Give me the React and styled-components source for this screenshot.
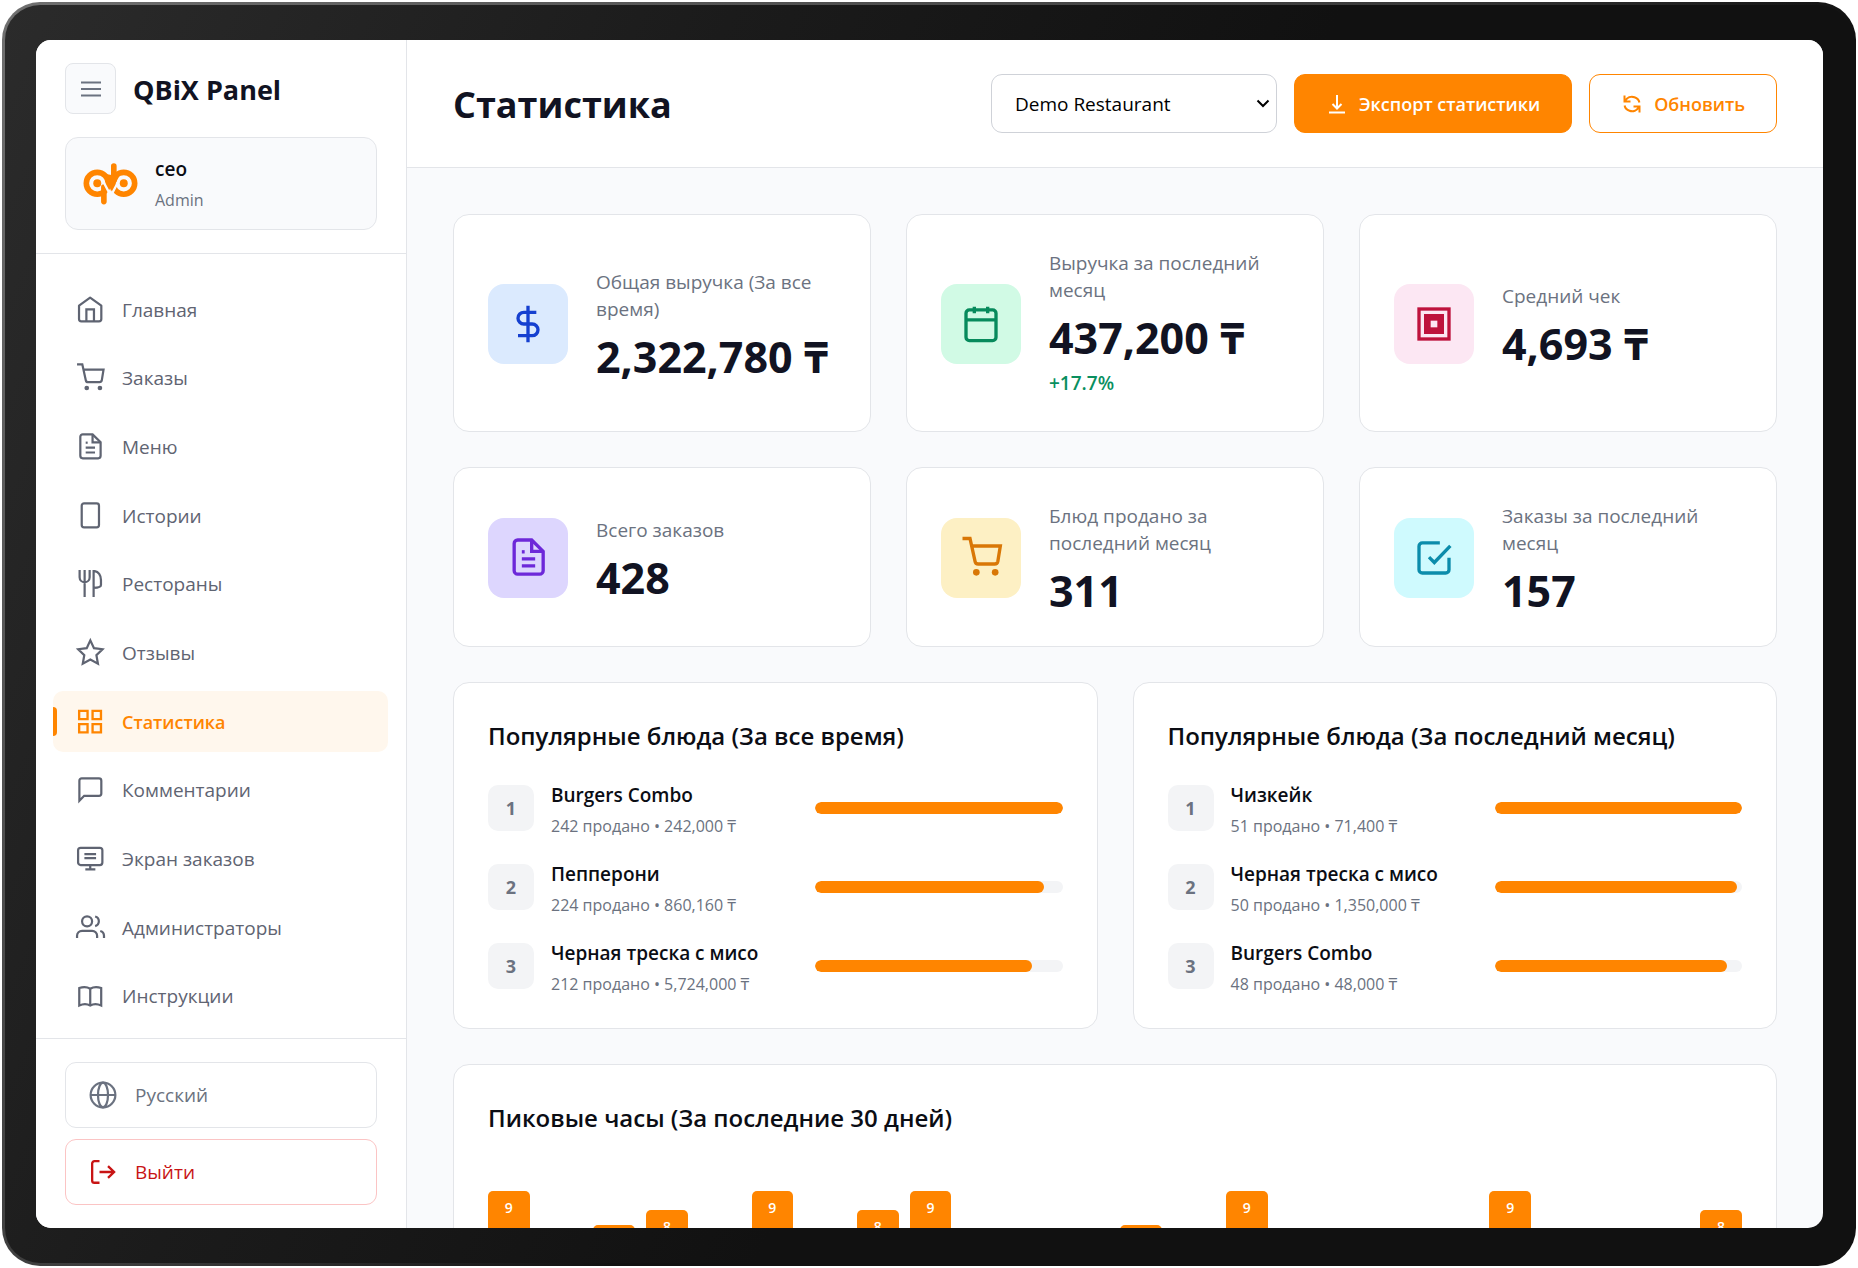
import React from "react";
import styled, { createGlobalStyle } from "styled-components";

const COLORS = {
  orange: "#ff8500",
  orangeSoft: "#fff7ed",
  ink: "#111322",
  text: "#0b0d14",
  muted: "#6b7280",
  nav: "#5f6472",
  line: "#e3e5e9",
  page: "#f9fafc",
  track: "#f3f4f6",
  red: "#c81414",
  green: "#0a8f5f",
};

const GlobalStyle = createGlobalStyle`
  * {
    box-sizing: border-box;
  }

  body {
    margin: 0;
    background: #ffffff;
    color: ${COLORS.text};
    font-family: "Open Sans", "Noto Sans", sans-serif;
    font-size: 18px;
  }

  button,
  select {
    font: inherit;
    cursor: pointer;
  }

  h1,
  h2,
  p,
  ul,
  ol {
    margin: 0;
    padding: 0;
  }

  ul,
  ol {
    list-style: none;
  }
`;

const Page = styled.div`
  height: 100vh;
  padding: 2px;
`;

const Device = styled.div`
  height: 100%;
  padding: 35px 30px 35px 31px;
  border: 3px solid transparent;
  border-radius: 38px;
  background:
    linear-gradient(115deg, #2b2b2b 0%, #1b1b1b 30%, #111111 55%) padding-box,
    linear-gradient(135deg, #707070 0%, #3a3a3a 45%, #111111 60%) border-box;
`;

const Screen = styled.div`
  height: 100%;
  display: flex;
  overflow: hidden;
  border-radius: 15px;
  background: ${COLORS.page};
`;

const Sidebar = styled.aside`
  width: 371px;
  flex-shrink: 0;
  display: flex;
  flex-direction: column;
  background: #ffffff;
  border-right: 1px solid ${COLORS.line};
`;

const SidebarTop = styled.div`
  padding: 23px 29px;
  border-bottom: 1px solid ${COLORS.line};
`;

const Brand = styled.div`
  display: flex;
  align-items: center;
  gap: 17px;
  margin-bottom: 23px;
`;

const MenuButton = styled.button`
  width: 51px;
  height: 51px;
  display: flex;
  align-items: center;
  justify-content: center;
  padding: 0;
  border: 1px solid ${COLORS.line};
  border-radius: 8px;
  background: ${COLORS.page};
  color: ${COLORS.muted};
`;

const BrandName = styled.div`
  padding-top: 2px;
  font-size: 27px;
  line-height: 36px;
  font-weight: 700;
  color: ${COLORS.ink};
`;

const Profile = styled.div`
  display: flex;
  align-items: center;
  gap: 17px;
  padding: 15px 17px;
  border: 1px solid ${COLORS.line};
  border-radius: 13px;
  background: ${COLORS.page};
`;

const ProfileName = styled.div`
  font-size: 19px;
  line-height: 33px;
  font-weight: 600;
`;

const ProfileRole = styled.div`
  font-size: 16px;
  line-height: 28px;
  color: ${COLORS.muted};
`;

const Nav = styled.nav`
  flex: 1;
  display: flex;
  flex-direction: column;
  justify-content: space-between;
  padding: 25px 18px 11px 17px;
`;

const NavLink = styled.a`
  position: relative;
  height: 61px;
  display: flex;
  align-items: center;
  gap: 18px;
  padding: 0 23px;
  border-radius: 10px;
  font-size: ${({ $active }) => ($active ? 18 : 19)}px;
  font-weight: ${({ $active }) => ($active ? 600 : 400)};
  color: ${({ $active }) => ($active ? COLORS.orange : COLORS.nav)};
  background: ${({ $active }) => ($active ? COLORS.orangeSoft : "transparent")};
  text-decoration: none;

  &::before {
    content: "";
    display: ${({ $active }) => ($active ? "block" : "none")};
    position: absolute;
    left: 0;
    top: 16px;
    bottom: 16px;
    width: 4px;
    border-radius: 0 4px 4px 0;
    background: ${COLORS.orange};
  }
`;

const SidebarBottom = styled.div`
  display: flex;
  flex-direction: column;
  gap: 11px;
  padding: 23px 29px;
  border-top: 1px solid ${COLORS.line};
`;

const SideButton = styled.button`
  height: 66px;
  display: flex;
  align-items: center;
  gap: 18px;
  padding: 0 23px;
  border: 1px solid ${({ $danger }) => ($danger ? "#fbc4c4" : COLORS.line)};
  border-radius: 11px;
  background: #ffffff;
  font-size: 19px;
  color: ${({ $danger }) => ($danger ? COLORS.red : COLORS.muted)};
`;

const Main = styled.main`
  flex: 1;
  min-width: 0;
  overflow: hidden;
`;

const Header = styled.header`
  height: 128px;
  display: flex;
  align-items: center;
  justify-content: space-between;
  padding: 0 46px;
  background: #ffffff;
  border-bottom: 1px solid ${COLORS.line};
`;

const PageTitle = styled.h1`
  padding-top: 2px;
  font-size: 36px;
  line-height: 48px;
  font-weight: 700;
  color: ${COLORS.ink};
`;

const Actions = styled.div`
  display: flex;
  gap: 17px;
`;

const SelectBox = styled.div`
  position: relative;
  width: 286px;

  & svg {
    position: absolute;
    right: 7px;
    top: 22px;
    pointer-events: none;
  }
`;

const Select = styled.select`
  width: 100%;
  height: 59px;
  padding: 0 23px;
  appearance: none;
  border: 1px solid #cfd2d8;
  border-radius: 11px;
  background: #ffffff;
  color: #000000;
  font-size: 19px;
`;

const ActionButton = styled.button`
  height: 59px;
  display: flex;
  align-items: center;
  gap: 13px;
  padding: 0 31px 0 33px;
  border: 1px solid ${COLORS.orange};
  border-radius: 11px;
  background: ${({ $primary }) => ($primary ? COLORS.orange : "#ffffff")};
  color: ${({ $primary }) => ($primary ? "#ffffff" : COLORS.orange)};
  font-size: 18px;
  font-weight: 600;
  white-space: nowrap;
`;

const Content = styled.div`
  display: flex;
  flex-direction: column;
  gap: 35px;
  padding: 46px;
`;

const StatGrid = styled.section`
  display: grid;
  grid-template-columns: repeat(3, minmax(0, 1fr));
  gap: 35px;
`;

const Card = styled.div`
  padding: 34px 34px 31px;
  border: 1px solid ${COLORS.line};
  border-radius: 16px;
  background: #ffffff;
`;

const StatCard = styled(Card)`
  display: flex;
  align-items: center;
  gap: 28px;
  padding: 35px 34px 33px;
`;

const StatIcon = styled.div`
  width: 80px;
  height: 80px;
  flex-shrink: 0;
  display: flex;
  align-items: center;
  justify-content: center;
  border-radius: 16px;
  background: ${({ $bg }) => $bg};
  color: ${({ $color }) => $color};
`;

const StatLabel = styled.p`
  font-size: 19px;
  line-height: 27px;
  color: ${COLORS.muted};
`;

const StatValue = styled.p`
  margin-top: 12px;
  font-size: 43px;
  line-height: 44px;
  font-weight: 700;
  color: ${COLORS.ink};
  white-space: nowrap;
`;

const StatChange = styled.p`
  margin-top: 8px;
  font-size: 19px;
  line-height: 30px;
  font-weight: 600;
  color: ${COLORS.green};
`;

const DishGrid = styled.section`
  display: grid;
  grid-template-columns: repeat(2, minmax(0, 1fr));
  gap: 35px;
`;

const CardTitle = styled.h2`
  font-size: 24px;
  line-height: 38px;
  font-weight: 600;
`;

const DishList = styled.ol`
  display: flex;
  flex-direction: column;
  gap: 17px;
  margin-top: 22px;
`;

const DishRow = styled.li`
  display: grid;
  grid-template-columns: 46px minmax(0, 1fr) minmax(0, 1fr);
  align-items: center;
  gap: 17px;
`;

const Rank = styled.div`
  height: 46px;
  display: flex;
  align-items: center;
  justify-content: center;
  border-radius: 10px;
  background: ${COLORS.track};
  color: ${COLORS.muted};
  font-weight: 700;
`;

const DishName = styled.div`
  font-size: 19px;
  line-height: 36px;
  font-weight: 600;
  white-space: nowrap;
`;

const DishMeta = styled.div`
  font-size: 16px;
  line-height: 26px;
  color: ${COLORS.muted};
  white-space: nowrap;
`;

const Track = styled.div`
  height: 12px;
  border-radius: 6px;
  background: ${COLORS.track};
  overflow: hidden;
`;

const Fill = styled.div`
  height: 100%;
  border-radius: 6px;
  background: ${COLORS.orange};
`;

const Chart = styled.div`
  height: 224px;
  display: flex;
  align-items: flex-end;
  gap: 11px;
  padding-top: 54px;
`;

const ChartBar = styled.div`
  flex: 1;
  padding-top: 7px;
  border-radius: 5px 5px 0 0;
  background: ${COLORS.orange};
  color: #ffffff;
  font-size: 14px;
  line-height: 20px;
  font-weight: 600;
  text-align: center;
`;

const EmptyHour = styled.div`
  flex: 1;
`;

const Icon = ({ size = 28, weight = 1.9, children }) => (
  <svg
    width={size}
    height={size}
    viewBox="0 0 24 24"
    fill="none"
    stroke="currentColor"
    strokeWidth={weight}
    overflow="visible"
    aria-hidden="true"
  >
    {children}
  </svg>
);

const HomeShape = () => (
  <>
    <path d="M2.6 8.2v11.6a2 2 0 0 0 2 2h15.1a2 2 0 0 0 2-2V8.2L12.1 1.4z" strokeLinejoin="round" />
    <path d="M8.9 21.8V11.4h6.5v10.4" />
  </>
);

const CartShape = () => (
  <>
    <path d="M.9.3h4.5l3 13.6a2 2 0 0 0 2 1.7h9.7a2 2 0 0 0 2-1.6l1.5-9.2H6.4" />
    <circle cx="9.2" cy="20.6" r="2" fill="currentColor" stroke="none" />
    <circle cx="20.5" cy="20.6" r="2" fill="currentColor" stroke="none" />
  </>
);

const DocShape = () => (
  <>
    <path d="M14.2 1.2H5.8a2.1 2.1 0 0 0-2.1 2.1v16.3a2.1 2.1 0 0 0 2.1 2.1H19a2.1 2.1 0 0 0 2.1-2.1V8z" />
    <path d="M14.2 1.2V8h6.9M8.3 12.5h8M8.3 16.7h8" />
    <path d="M8.3 8.3h1.7" />
  </>
);

const TabletShape = () => <rect x="4.9" y="1.2" width="14.8" height="20.6" rx="2" />;

const CutleryShape = () => (
  <>
    <path d="M3.1 0v6.2a4.3 4.3 0 0 0 8.6 0V0M7.4 0v23.2" />
    <path d="M15.1 23.2V.9h1c3 .4 5.3 3.6 5.3 7.6v4.3c0 1.6-1.6 2.3-6.3 2.5" />
  </>
);

const StarShape = () => (
  <path d="M12.3 1.2l3.1 6.7 7.3.9-5.2 5 1.3 7.4-6.5-3.6-6.5 3.6 1.3-7.4-5.2-5 7.3-.9z" />
);

const GridShape = () => (
  <path
    d="M2.7 2.4h7.2v7.1H2.7zM14.2 2.4h7.2v7.1h-7.2zM2.7 13.8h7.2v7.1H2.7zM14.2 13.8h7.2v7.1h-7.2z"
    strokeWidth="2"
  />
);

const CommentShape = () => (
  <path d="M2.9 21.3V4a2 2 0 0 1 2-2h14.8a2 2 0 0 1 2 2v11a2 2 0 0 1-2 2H7z" />
);

const MonitorShape = () => (
  <>
    <rect x="1.8" y="2.4" width="20.8" height="14.8" rx="2.2" />
    <path d="M7.2 7.8h10M7.2 11.3h10M12.2 17.2v3.7M8 20.9h8.6" />
  </>
);

const UsersShape = () => (
  <>
    <path d="M.9 20.6v-1.9a4.3 4.3 0 0 1 4.3-4.3h8.6a4.3 4.3 0 0 1 4.3 4.3v1.9" />
    <circle cx="9.5" cy="6.3" r="4.3" />
    <path d="M24 20.6v-1.9a4.3 4.3 0 0 0-3.2-4.1M16.4 2.1a4.3 4.3 0 0 1 0 8.3" />
  </>
);

const BookShape = () => (
  <path d="M12.2 5.8C9.6 4.2 6 4.1 2.8 5.2v14.9c3.2-1.5 6.8-1.5 9.4.1 2.6-1.6 6.2-1.6 9.4-.1V5.2c-3.2-1.1-6.8-1-9.4.6zM12.2 5.8v14.2" />
);

const GlobeShape = () => (
  <>
    <circle cx="12" cy="12" r="10.6" />
    <ellipse cx="12" cy="12" rx="4.3" ry="10.6" />
    <path d="M1.4 12h21.2" />
  </>
);

const LogoutShape = () => (
  <path
    d="M9 2.7H4.7a2 2 0 0 0-2 2v14.5a2 2 0 0 0 2 2H9M9 12h12.3M16.3 7l5.2 5-5.2 5"
    strokeWidth="2"
  />
);

const DollarShape = () => (
  <path d="M12 1v22M17 5H9.5a3.5 3.5 0 0 0 0 7h5a3.5 3.5 0 0 1 0 7H6" />
);

const CalendarShape = () => (
  <>
    <rect x="3" y="3.5" width="18" height="18.5" rx="2" />
    <path d="M3 9.5h18M8 1.6v4M16 1.6v4" />
  </>
);

const TargetShape = () => (
  <>
    <rect x="3" y="3" width="18" height="18" />
    <rect x="8" y="8" width="8" height="8" strokeWidth="4" />
  </>
);

const CheckShape = () => (
  <path d="M15.5 2.9H5a2 2 0 0 0-2 2V19a2 2 0 0 0 2 2h14a2 2 0 0 0 2-2v-7.1M9 11.5l3.2 3.2 9.6-10" />
);

const Logo = () => (
  <svg width="55" height="42" viewBox="248 488 166 126" fill="none" aria-hidden="true">
    <g stroke={COLORS.orange} strokeWidth="17" strokeLinecap="round">
      <circle cx="291" cy="549" r="33" />
      <circle cx="371" cy="549" r="33" />
      <path d="M311 560v44M341 497v44" />
    </g>
    <path d="M314 520l19 54 24-46z" fill={COLORS.orange} />
    <path d="M310 545l20 38M354 545l-20 38" stroke={COLORS.page} strokeWidth="7" />
    <circle cx="291" cy="549" r="12" fill={COLORS.orange} />
    <circle cx="371" cy="549" r="12" fill={COLORS.orange} />
  </svg>
);

const navItems = [
  { label: "Главная", Shape: HomeShape },
  { label: "Заказы", Shape: CartShape },
  { label: "Меню", Shape: DocShape },
  { label: "Истории", Shape: TabletShape },
  { label: "Рестораны", Shape: CutleryShape },
  { label: "Отзывы", Shape: StarShape },
  { label: "Статистика", Shape: GridShape, active: true },
  { label: "Комментарии", Shape: CommentShape },
  { label: "Экран заказов", Shape: MonitorShape },
  { label: "Администраторы", Shape: UsersShape },
  { label: "Инструкции", Shape: BookShape },
];

const stats = [
  { label: "Общая выручка (За все время)", value: "2,322,780 ₸", Shape: DollarShape, bg: "#dbeafe", color: "#1540d0" },
  { label: "Выручка за последний месяц", value: "437,200 ₸", change: "+17.7%", Shape: CalendarShape, bg: "#d1fae5", color: "#078a5c" },
  { label: "Средний чек", value: "4,693 ₸", Shape: TargetShape, bg: "#fce7f3", color: "#be123c" },
  { label: "Всего заказов", value: "428", Shape: DocShape, bg: "#ddd6fe", color: "#6d28d9" },
  { label: "Блюд продано за последний месяц", value: "311", Shape: CartShape, bg: "#fdf0c4", color: "#d97706" },
  { label: "Заказы за последний месяц", value: "157", Shape: CheckShape, bg: "#cffafe", color: "#0c8cab" },
];

const dishLists = [
  {
    title: "Популярные блюда (За все время)",
    dishes: [
      { name: "Burgers Combo", sold: 242, sum: "242,000" },
      { name: "Пепперони", sold: 224, sum: "860,160" },
      { name: "Черная треска с мисо", sold: 212, sum: "5,724,000" },
    ],
  },
  {
    title: "Популярные блюда (За последний месяц)",
    dishes: [
      { name: "Чизкейк", sold: 51, sum: "71,400" },
      { name: "Черная треска с мисо", sold: 50, sum: "1,350,000" },
      { name: "Burgers Combo", sold: 48, sum: "48,000" },
    ],
  },
];

// load for every hour of the day, percent of the busiest one
const PEAK_ORDERS = 9;
const hours = [100, 0, 80, 89, 0, 100, 0, 89, 100, 0, 0, 0, 80, 0, 100, 0, 0, 0, 0, 100, 0, 0, 0, 89];

const DishCard = ({ title, dishes }) => (
  <Card>
    <CardTitle>{title}</CardTitle>
    <DishList>
      {dishes.map((dish, i) => (
        <DishRow key={dish.name}>
          <Rank>{i + 1}</Rank>
          <div>
            <DishName>{dish.name}</DishName>
            <DishMeta>
              {dish.sold} продано • {dish.sum} ₸
            </DishMeta>
          </div>
          <Track>
            <Fill style={{ width: `${(dish.sold / dishes[0].sold) * 100}%` }} />
          </Track>
        </DishRow>
      ))}
    </DishList>
  </Card>
);

const App = () => {
  return (
    <Page>
      <GlobalStyle />
      <Device>
        <Screen>
          <Sidebar>
            <SidebarTop>
              <Brand>
                <MenuButton aria-label="Меню">
                  <svg width="20" height="16" viewBox="0 0 20 16" stroke="currentColor" strokeWidth="2">
                    <path d="M0 1.5h20M0 8h20M0 14.5h20" />
                  </svg>
                </MenuButton>
                <BrandName>QBiX Panel</BrandName>
              </Brand>
              <Profile>
                <Logo />
                <div>
                  <ProfileName>ceo</ProfileName>
                  <ProfileRole>Admin</ProfileRole>
                </div>
              </Profile>
            </SidebarTop>
            <Nav>
              {navItems.map(({ label, Shape, active }) => (
                <NavLink key={label} href="#" $active={active}>
                  <Icon>
                    <Shape />
                  </Icon>
                  {label}
                </NavLink>
              ))}
            </Nav>
            <SidebarBottom>
              <SideButton>
                <Icon>
                  <GlobeShape />
                </Icon>
                Русский
              </SideButton>
              <SideButton $danger>
                <Icon>
                  <LogoutShape />
                </Icon>
                Выйти
              </SideButton>
            </SidebarBottom>
          </Sidebar>

          <Main>
            <Header>
              <PageTitle>Статистика</PageTitle>
              <Actions>
                <SelectBox>
                  <Select aria-label="Ресторан" defaultValue="demo">
                    <option value="demo">Demo Restaurant</option>
                  </Select>
                  <svg width="14" height="14" viewBox="0 0 14 14" fill="none" stroke="#000000" strokeWidth="2">
                    <path d="M1.5 4.5L7 10l5.5-5.5" />
                  </svg>
                </SelectBox>
                <ActionButton $primary>
                  <svg width="18" height="20" viewBox="0 0 18 20" fill="none" stroke="currentColor" strokeWidth="2">
                    <path d="M9 1v13M4.5 10L9 14.5l4.5-4.5M1 18.5h16" />
                  </svg>
                  Экспорт статистики
                </ActionButton>
                <ActionButton>
                  <svg width="18" height="20" viewBox="0 0 18 20" fill="none" stroke="currentColor" strokeWidth="2">
                    <path d="M1.5 1.5v6h6M2 7.2C4 3.3 8 2 11.5 3.2c2.6.9 4.5 3 4.9 5.3" />
                    <path d="M16.5 18.5v-6h-6M16 12.8c-2 3.9-6 5.2-9.5 4-2.6-.9-4.5-3-4.9-5.3" />
                  </svg>
                  Обновить
                </ActionButton>
              </Actions>
            </Header>

            <Content>
              <StatGrid>
                {stats.map(({ label, value, change, Shape, bg, color }) => (
                  <StatCard key={label}>
                    <StatIcon $bg={bg} $color={color}>
                      <Icon size={40} weight={2}>
                        <Shape />
                      </Icon>
                    </StatIcon>
                    <div>
                      <StatLabel>{label}</StatLabel>
                      <StatValue>{value}</StatValue>
                      {change && <StatChange>{change}</StatChange>}
                    </div>
                  </StatCard>
                ))}
              </StatGrid>

              <DishGrid>
                {dishLists.map((list) => (
                  <DishCard key={list.title} {...list} />
                ))}
              </DishGrid>

              <Card>
                <CardTitle>Пиковые часы (За последние 30 дней)</CardTitle>
                <Chart>
                  {hours.map((load, hour) =>
                    load ? (
                      <ChartBar key={hour} style={{ height: `${load}%` }}>
                        {Math.round((load / 100) * PEAK_ORDERS)}
                      </ChartBar>
                    ) : (
                      <EmptyHour key={hour} />
                    )
                  )}
                </Chart>
              </Card>
            </Content>
          </Main>
        </Screen>
      </Device>
    </Page>
  );
};

export default App;
